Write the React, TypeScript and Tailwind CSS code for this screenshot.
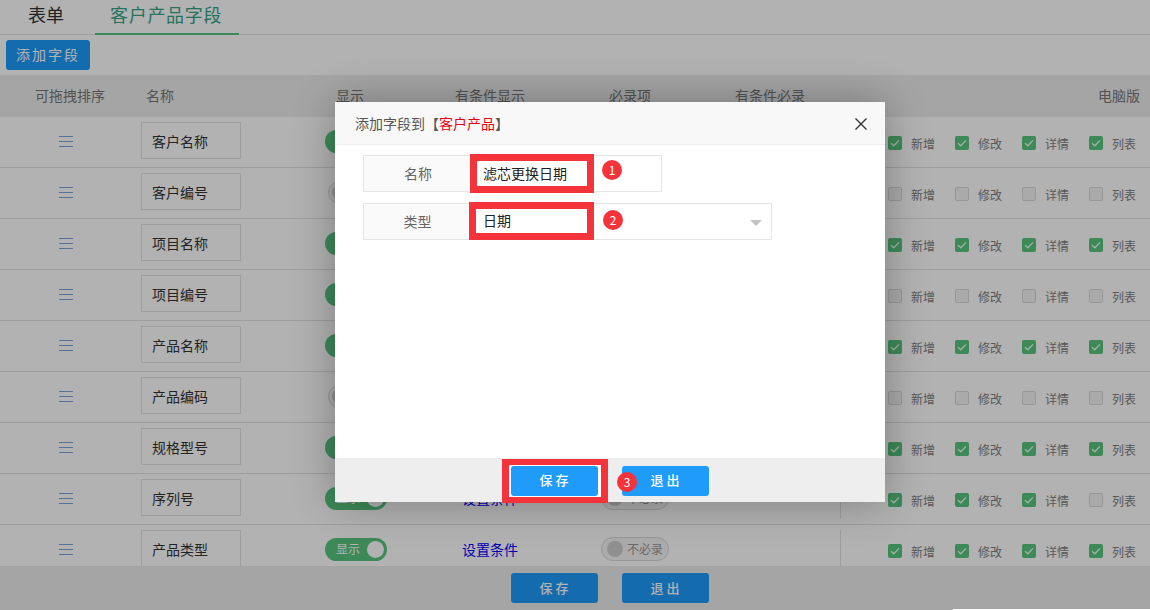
const font = { fontFamily: '"Noto Sans CJK SC", "Liberation Sans", sans-serif' };

type Row = {
  name: string;
  show: boolean;
  checks: boolean[];
};

const all = [true, true, true, true];
const none = [false, false, false, false];

const rows: Row[] = [
  { name: "客户名称", show: true, checks: all },
  { name: "客户编号", show: false, checks: none },
  { name: "项目名称", show: true, checks: all },
  { name: "项目编号", show: true, checks: none },
  { name: "产品名称", show: true, checks: all },
  { name: "产品编码", show: false, checks: none },
  { name: "规格型号", show: true, checks: all },
  { name: "序列号", show: true, checks: [true, true, true, false] },
  { name: "产品类型", show: true, checks: all },
];

const checkLabels = ["新增", "修改", "详情", "列表"];

function DragIcon() {
  return (
    <svg width="14" height="13" viewBox="0 0 14 13" fill="none" stroke="#7ba3dc" strokeWidth="1">
      <path d="M0 1.5h14M0 6.5h14M0 11.5h14" />
    </svg>
  );
}

function Check({ on, label }: { on: boolean; label: string }) {
  return (
    <div className="flex w-[67px] shrink-0 items-center">
      {on ? (
        <span className="flex h-[14px] w-[14px] items-center justify-center rounded-[2px] bg-[#58c47e]">
          <svg width="12" height="12" viewBox="0 0 12 12" fill="none" stroke="#eafff0" strokeWidth="1.3">
            <path d="M2 6.2l2.8 2.6L10 3.4" />
          </svg>
        </span>
      ) : (
        <span className="h-[14px] w-[14px] rounded-[2px] border border-[#d8d8d8] bg-[#f4f4f4]" />
      )}
      <span className="ml-[9px] pt-[1px] text-[12px] leading-none text-[#808080]">{label}</span>
    </div>
  );
}

function ShowToggle({ on }: { on: boolean }) {
  if (on) {
    return (
      <div className="flex h-[23px] w-[62px] items-center justify-between rounded-full bg-[#58c47e] pl-[11px] pr-[3px]">
        <span className="text-[12px] leading-none text-white">显示</span>
        <span className="h-[17px] w-[17px] rounded-full bg-white" />
      </div>
    );
  }
  return (
    <div className="ml-[3px] flex h-[23px] w-[66px] items-center justify-between rounded-full border border-[#d8d8d8] bg-[#f5f5f5] pl-[3px] pr-[6px]">
      <span className="h-[15px] w-[15px] rounded-full bg-[#cfcfcf]" />
      <span className="text-[12px] leading-none text-[#999]">不显示</span>
    </div>
  );
}

function TableRow({ row }: { row: Row }) {
  return (
    <div className="flex h-[51px] border-b border-[#e2e2e2]">
      <div className="flex w-[131px] shrink-0 items-center justify-center pb-[2px]">
        <DragIcon />
      </div>
      <div className="w-[194px] shrink-0 pl-[10px] pt-[5px]">
        <div className="flex h-[37px] w-[100px] items-center border border-[#e2e2e2] pl-[10px] pt-[1px] text-[14px] text-[#333]">
          {row.name}
        </div>
      </div>
      <div className="flex w-[137px] shrink-0 items-center pb-[2px]">
        <ShowToggle on={row.show} />
      </div>
      <div className="flex w-[139px] shrink-0 items-center pb-[2px] text-[14px] text-[#0000ff]">设置条件</div>
      <div className="flex w-[239px] shrink-0 items-center pb-[2px]">
        <div className="flex h-[24px] w-[68px] items-center justify-between rounded-full border border-[#d8d8d8] bg-[#f5f5f5] pl-[5px] pr-[5px]">
          <span className="h-[16px] w-[16px] rounded-full bg-[#cfcfcf]" />
          <span className="text-[12px] leading-none text-[#999]">不必录</span>
        </div>
      </div>
      <div className="my-[5px] flex min-w-0 flex-1 items-center border-l border-[#e2e2e2] pl-[47px] pt-[2px]">
        {row.checks.map((on, i) => (
          <Check key={i} on={on} label={checkLabels[i]} />
        ))}
      </div>
    </div>
  );
}

function Badge({ n, className }: { n: number; className: string }) {
  return (
    <span
      className={`absolute flex h-[20px] w-[20px] items-center justify-center rounded-full bg-[#f5333a] text-[12px] leading-none text-white ${className}`}
    >
      {n}
    </span>
  );
}

function FooterButtons({ className }: { className: string }) {
  return (
    <div className={`relative flex h-full items-center ${className}`}>
      <button className="h-[30px] w-[87px] shrink-0 rounded-[3px] bg-[#1e9bfb] pb-[1px] pl-[2px] text-[13px] font-medium tracking-[3px] text-white">
        保存
      </button>
      <button className="ml-[24px] h-[30px] w-[87px] shrink-0 rounded-[3px] bg-[#1e9bfb] pb-[1px] pl-[2px] text-[13px] font-medium tracking-[3px] text-white">
        退出
      </button>
    </div>
  );
}

export default function App() {
  return (
    <div className="relative h-[610px] w-[1150px] overflow-hidden bg-white" style={font}>
      {/* tabs */}
      <div className="flex h-[35px] border-b border-[#e2e2e2]">
        <div className="w-[95px] pl-[28px] text-[18px] leading-[28px] text-[#333]">表单</div>
        <div className="h-[35px] w-[144px] border-b-2 border-[#58c47e] pl-[15px] text-[18px] leading-[28px] tracking-[0.7px] text-[#35a585]">
          客户产品字段
        </div>
      </div>

      <div className="pl-[6px] pt-[5px]">
        <button className="h-[30px] w-[84px] rounded-[3px] bg-[#1a9bfa] pb-[2px] text-[14px] tracking-[2px] text-white">
          添加字段
        </button>
      </div>

      {/* table head */}
      <div className="mt-[5px] flex h-[42px] items-center bg-[#ededed] pb-[2px] text-[14px] text-[#777]">
        <div className="w-[146px] shrink-0 pl-[35px]">可拖拽排序</div>
        <div className="w-[190px] shrink-0">名称</div>
        <div className="w-[119px] shrink-0">显示</div>
        <div className="w-[154px] shrink-0">有条件显示</div>
        <div className="w-[126px] shrink-0">必录项</div>
        <div className="w-[363px] shrink-0">有条件必录</div>
        <div className="shrink-0">电脑版</div>
      </div>

      {rows.map((r) => (
        <TableRow key={r.name} row={r} />
      ))}

      {/* page footer */}
      <div className="absolute bottom-0 left-0 h-[44px] w-full bg-[#ececec]">
        <FooterButtons className="pl-[511px]" />
      </div>

      {/* dim layer */}
      <div className="absolute inset-0 bg-black/30" />
      <div className="absolute bottom-0 right-0 h-[1px] w-[197px] bg-white" />

      {/* dialog */}
      <div className="absolute left-[335px] top-[102px] flex h-[400px] w-[550px] flex-col bg-white shadow-[0_0_40px_rgba(0,0,0,0.3)]">
        <div className="flex h-[43px] items-center justify-between border-b border-[#eee] bg-[#f8f8f8] pl-[20px] pr-[18px]">
          <div className="text-[14px] text-[#555]">
            添加字段到【<span className="text-[#e60012]">客户产品</span>】
          </div>
          <svg className="mt-[1px]" width="12" height="12" viewBox="0 0 12 12" fill="none" stroke="#333" strokeWidth="1.4">
            <path d="M0.5 0.5l11 11M11.5 0.5l-11 11" />
          </svg>
        </div>

        <div className="flex-1 pl-[28px] pt-[10px]">
          <div className="relative flex h-[37px] w-[299px] border border-[#e6e6e6] text-[14px]">
            <div className="flex w-[106px] items-center justify-center bg-[#fafafa] pl-[2px] text-[#666]">名称</div>
            <div className="-my-[2px] flex h-[39px] w-[124px] items-center border-[7px] border-[#f5333a] bg-white pl-[6px] text-[#222]">
              滤芯更换日期
            </div>
            <Badge n={1} className="left-[238px] top-[4px]" />
          </div>

          <div className="relative mt-[11px] flex h-[37px] w-[409px] border border-[#e6e6e6] text-[14px]">
            <div className="flex w-[105px] items-center justify-center bg-[#fafafa] pl-[2px] text-[#666]">类型</div>
            <div className="-my-[2px] flex h-[38px] w-[125px] items-center border-[7px] border-[#f5333a] bg-white pb-[1px] pl-[7px] text-[#222]">
              日期
            </div>
            <Badge n={2} className="left-[239px] top-[6px]" />
            <span className="absolute right-[9px] top-[16px] h-0 w-0 border-x-[6px] border-t-[6px] border-x-transparent border-t-[#c2c2c2]" />
          </div>
        </div>

        <div className="relative h-[44px] bg-[#eeeeee] pt-[1px]">
          {/* red mark on save */}
          <div className="absolute left-[167px] top-[1px] h-[44px] w-[106px] border-x-[7px] border-y-[6px] border-[#f5333a] bg-white" />
          <FooterButtons className="pl-[176px]" />
          <Badge n={3} className="left-[282px] top-[14px]" />
        </div>
      </div>
    </div>
  );
}
